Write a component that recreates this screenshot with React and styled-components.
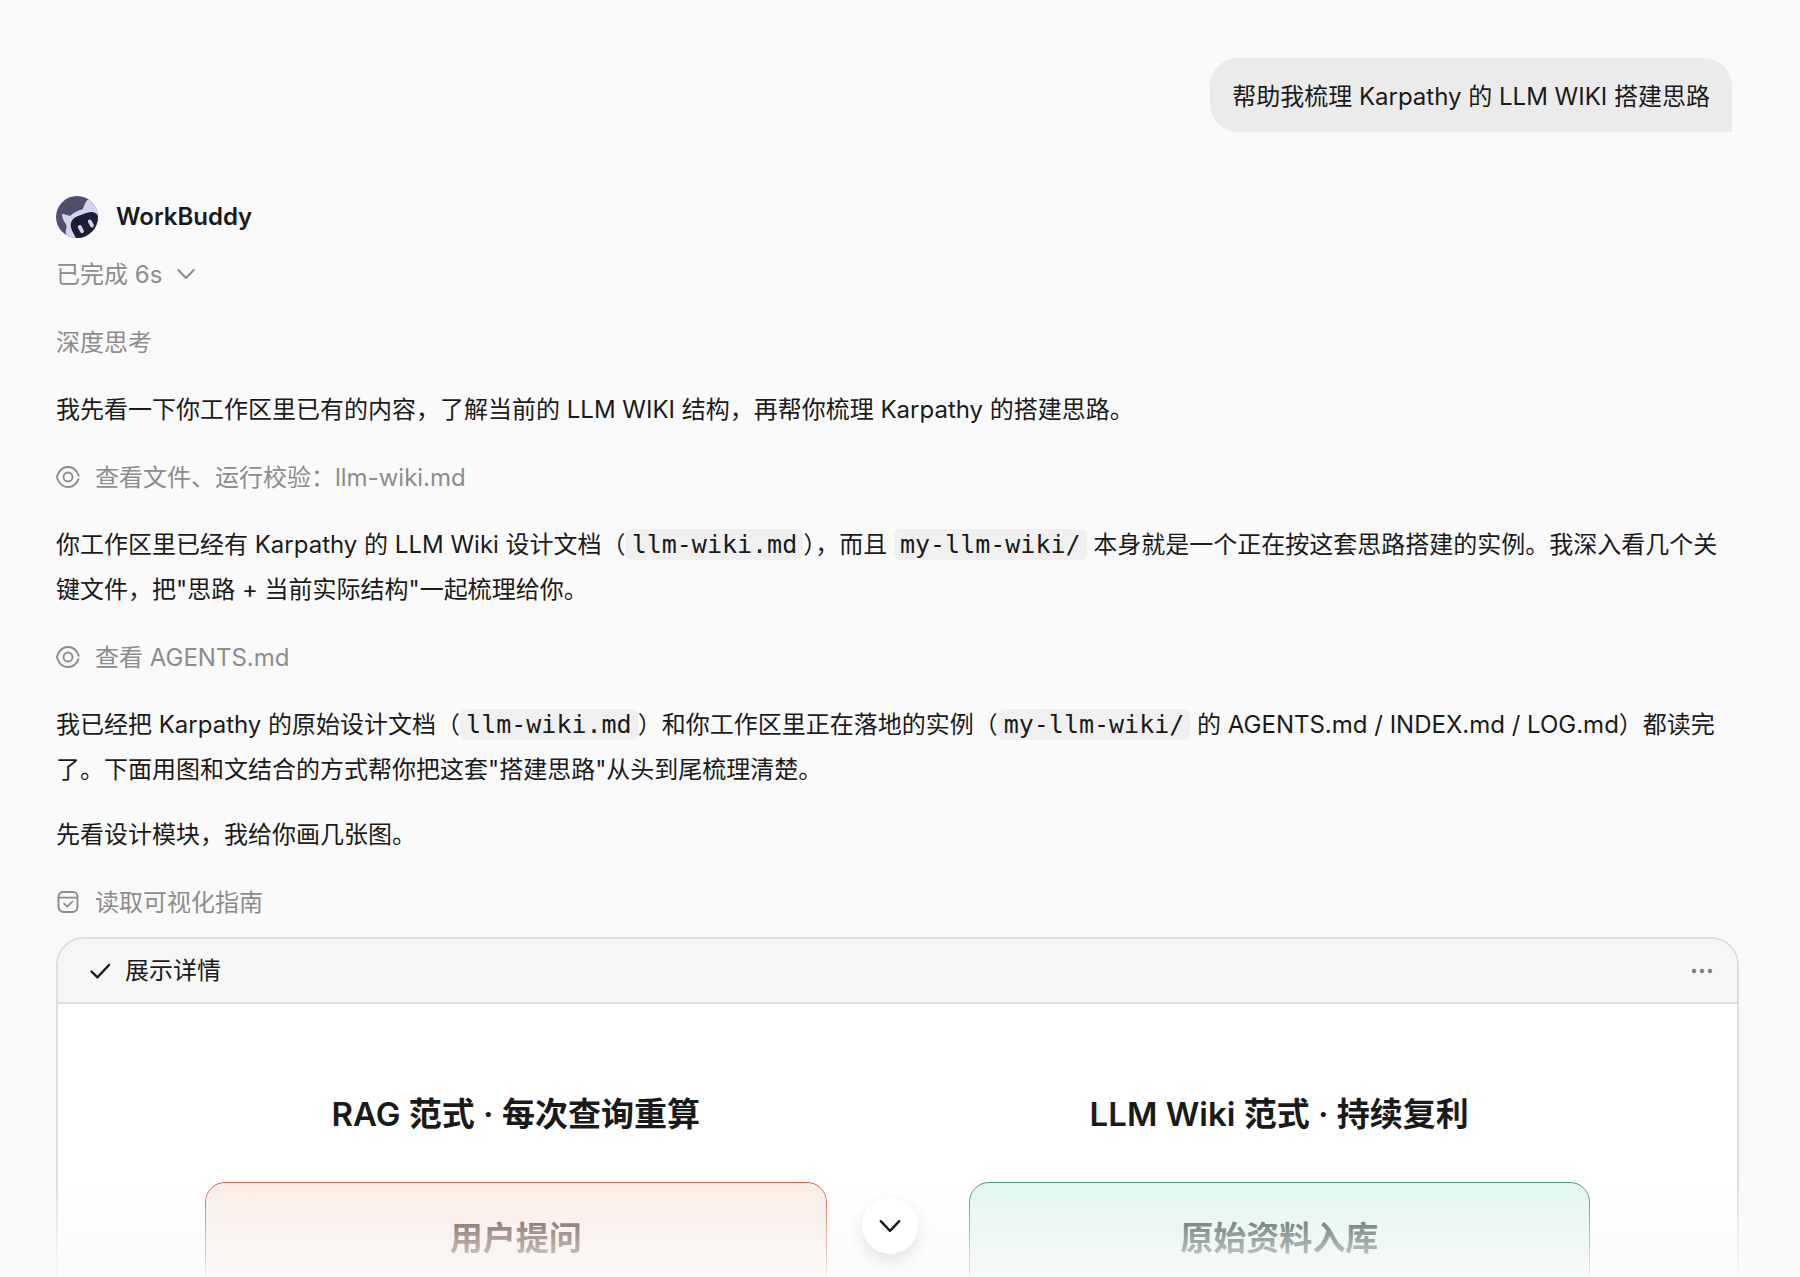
import styled, { createGlobalStyle } from 'styled-components';

const sans = `Inter, "Noto Sans CJK SC", sans-serif`;
const mono = `"DejaVu Sans Mono", "Noto Sans CJK SC", monospace`;

const steps = {
    files: '查看文件、运行校验：llm-wiki.md',
    agents: '查看 AGENTS.md',
    guide: '读取可视化指南',
};

const lanes = [
    { title: 'RAG 范式 · 每次查询重算', first: '用户提问', tone: 'coral' },
    { title: 'LLM Wiki 范式 · 持续复利', first: '原始资料入库', tone: 'green' },
];

const tones = {
    coral: { line: '#d0653f', fill: '#faece7', text: '#4a2a20' },
    green: { line: '#3a9872', fill: '#e1f5ee', text: '#1f3a30' },
};

const ChevronIcon = ({ size }) => (
    <svg width={size} height={size} viewBox="0 0 20 20" fill="none" stroke="currentColor" strokeWidth="2" strokeLinecap="round" strokeLinejoin="round" aria-hidden="true">
        <path d="M2.3 6 10 14l7.7-8" />
    </svg>
);

const EyeIcon = () => (
    <svg width="24" height="24" viewBox="0 0 24 24" fill="none" stroke="currentColor" strokeWidth="1.9" strokeLinecap="round" aria-hidden="true">
        <path d="M22.7 10.8C20.8 5.2 17 2 12 2S3.2 5.4 1.3 10.5a4.2 4.2 0 0 0 0 3C3.2 18.600 7 22 12 22s8.600-2.900 10.500-7.800" />
        <circle cx="12" cy="12" r="4.5" />
    </svg>
);

const BoxCheckIcon = () => (
    <svg width="24" height="24" viewBox="0 0 24 24" fill="none" stroke="currentColor" strokeWidth="1.9" strokeLinecap="round" strokeLinejoin="round" aria-hidden="true">
        <path d="M2.5 7.6h19M7 2h10a4.5 4.5 0 0 1 4.500 4.500V17a5 5 0 0 1-5 5h-9a5 5 0 0 1-5-5V6.500A4.500 4.500 0 0 1 7 2Z" />
        <path d="m8 13.6 3.200 3 5.200-5" />
    </svg>
);

const CheckIcon = () => (
    <svg width="22" height="22" viewBox="0 0 22 22" fill="none" stroke="currentColor" strokeWidth="2.4" strokeLinecap="round" strokeLinejoin="round" aria-hidden="true">
        <path d="M2.500 11.500 8.500 17.300 20 5" />
    </svg>
);

const DotsIcon = () => (
    <svg width="22" height="22" viewBox="0 0 22 22" fill="currentColor" aria-hidden="true">
        <circle cx="3" cy="11" r="2.2" />
        <circle cx="11" cy="11" r="2.2" />
        <circle cx="19" cy="11" r="2.2" />
    </svg>
);

const Avatar = () => (
    <svg width="42" height="42" viewBox="0 0 42 42" role="img" aria-label="WorkBuddy">
        <defs>
            <clipPath id="avatarClip"><circle cx="21" cy="21" r="21" /></clipPath>
        </defs>
        <g clipPath="url(#avatarClip)">
            <rect width="42" height="42" fill="#4f4e6f" />
            <path d="M6 19.500C6 18 7.200 17.800 8.500 18.300L14 20C18 16.500 22 14.600 26.500 13.300L29.500 6.500C30.500 4 32 3 34 3.500L46 2V46H12C14 42 9.500 40 9.700 36C10 33 11.500 30.500 9.500 27.500C7.800 25 6.300 22 6 19.500Z" fill="#d3d4ea" />
            <path d="M14.800 29C14.800 24.500 17.500 22 22 20L31 16.700C36 15.200 40 16 42 20L44 26V40L36 46H22L17 36.500C15.500 33.700 14.800 31.500 14.800 29Z" fill="#1d1d33" />
            <path d="M23.800 31 26 35.200M33.800 25.500 36 29.500" stroke="#d3d4ea" strokeWidth="3.8" strokeLinecap="round" />
        </g>
    </svg>
);

export default function App() {
    return (
        <>
            <GlobalStyle />
            <Screen>
                <Thread>
                    <UserMessage>帮助我梳理 Karpathy 的 LLM WIKI 搭建思路</UserMessage>
                    <Sender>
                        <Avatar />
                        <h1>WorkBuddy</h1>
                    </Sender>
                    <Reply>
                        <StatusButton type="button">
                            已完成 6s
                            <ChevronIcon size={20} />
                        </StatusButton>
                        <StatusButton type="button">深度思考</StatusButton>
                        <Prose>
                            <p>我先看一下你工作区里已有的内容，了解当前的 LLM WIKI 结构，再帮你梳理 Karpathy 的搭建思路。</p>
                        </Prose>
                        <Step><EyeIcon />{steps.files}</Step>
                        <Prose>
                            <p>
                                你工作区里已经有 Karpathy 的 LLM Wiki 设计文档（<Code>llm-wiki.md</Code>），而且 <Code>my-llm-wiki/</Code> 本身就是一个正在按这套思路搭建的实例。我深入看几个关键文件，把"思路 + 当前实际结构"一起梳理给你。
                            </p>
                        </Prose>
                        <Step><EyeIcon />{steps.agents}</Step>
                        <Prose>
                            <p>
                                我已经把 Karpathy 的原始设计文档（<Code>llm-wiki.md</Code>）和你工作区里正在落地的实例（<Code>my-llm-wiki/</Code> 的 AGENTS.md / INDEX.md / LOG.md）都读完了。下面用图和文结合的方式帮你把这套"搭建思路"从头到尾梳理清楚。
                            </p>
                            <p>先看设计模块，我给你画几张图。</p>
                        </Prose>
                        <Step><BoxCheckIcon />{steps.guide}</Step>
                    </Reply>
                    <Card>
                        <CardHeader>
                            <CheckIcon />
                            <h2>展示详情</h2>
                            <MoreButton type="button" aria-label="更多"><DotsIcon /></MoreButton>
                        </CardHeader>
                        <Lanes>
                            {lanes.map(({ title, first, tone }) => (
                                <Lane key={tone}>
                                    <h3>{title}</h3>
                                    <Node $tone={tones[tone]}>{first}</Node>
                                </Lane>
                            ))}
                        </Lanes>
                    </Card>
                </Thread>
                <Fade />
                <ScrollButton type="button" aria-label="滚动到底部"><ChevronIcon size={24} /></ScrollButton>
            </Screen>
        </>
    );
}

const GlobalStyle = createGlobalStyle`
    * {
        box-sizing: border-box;
    }

    body {
        margin: 0;
        background: #fafafa;
        color: #1a1a1a;
        font-family: ${sans};
        font-size: 24px;
        line-height: 45px;
    }

    h1, h2, h3, p {
        margin: 0;
        font-size: inherit;
        font-weight: 400;
    }

    button {
        border: none;
        padding: 0;
        background: none;
        color: inherit;
        font: inherit;
        cursor: pointer;
    }

    svg {
        flex: none;
        display: block;
    }
`;

const Screen = styled.div`
    position: relative;
    height: 100vh;
    overflow: hidden;
`;

const Thread = styled.main`
    display: flex;
    flex-direction: column;
    padding: 58px 61px 0 56px;
`;

const UserMessage = styled.div`
    align-self: flex-end;
    margin-right: 7px;
    padding: 16px 22px 13px;
    border-radius: 28px 28px 0 28px;
    background: #ebebeb;
`;

const Sender = styled.div`
    display: flex;
    align-items: center;
    gap: 18px;
    margin: 62px 0 12px;

    h1 {
        font-weight: 600;
    }
`;

const Reply = styled.section`
    display: flex;
    flex-direction: column;
    align-items: flex-start;
    gap: 22px;
    padding-right: 16px;
`;

const StatusButton = styled.button`
    display: flex;
    align-items: center;
    gap: 14px;
    height: 46px;
    color: #8c8c8c;
`;

const Step = styled.div`
    display: flex;
    align-items: center;
    gap: 15px;
    height: 46px;
    color: #8c8c8c;
`;

const Prose = styled.div`
    display: flex;
    flex-direction: column;
    gap: 20px;
`;

const Code = styled.code`
    padding: 1px 6px;
    border-radius: 6px;
    background: #f0f0f0;
    font-family: ${mono};
    font-size: 25px;
    line-height: 1;
`;

const Card = styled.section`
    margin-top: 12px;
    border: 2px solid #d9dfe3;
    border-radius: 28px 28px 0 0;
    background: #fff;
    overflow: hidden;
`;

const CardHeader = styled.header`
    display: flex;
    align-items: center;
    gap: 14px;
    height: 65px;
    padding: 0 24px 0 31px;
    border-bottom: 2px solid #d9dfe3;
    background: #f6f6f6;
`;

const MoreButton = styled.button`
    margin-left: auto;
    color: #808080;
`;

const Lanes = styled.div`
    display: grid;
    grid-template-columns: 1fr 1fr;
    gap: 142px;
    padding: 86px 147px 80px;
    font-size: 33px;
    font-weight: 600;
    line-height: 48px;
    text-align: center;
`;

const Lane = styled.div`
    h3 {
        margin-bottom: 44px;
        font-weight: 600;
    }
`;

const Node = styled.div`
    padding: 31px 20px 50px;
    border: 1px solid ${({ $tone }) => $tone.line};
    border-radius: 20px;
    background: ${({ $tone }) => $tone.fill};
    color: ${({ $tone }) => $tone.text};
`;

const Fade = styled.div`
    position: absolute;
    inset: auto 0 0;
    height: 100px;
    background: linear-gradient(rgba(250, 250, 250, 0), rgba(250, 250, 250, 0.9));
    pointer-events: none;
`;

const ScrollButton = styled.button`
    position: absolute;
    bottom: 23px;
    left: calc(50% - 38px);
    display: grid;
    place-items: center;
    width: 56px;
    height: 56px;
    border-radius: 50%;
    background: #fff;
    box-shadow: 0 6px 16px rgba(0, 0, 0, 0.1);
`;
